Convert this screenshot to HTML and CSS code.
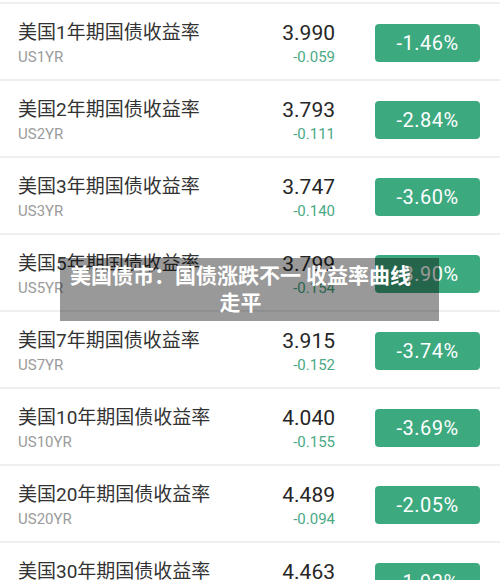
FILE: index.html
```html
<!DOCTYPE html>
<html lang="zh-CN">
<head>
  <meta charset="UTF-8" />
  <meta name="viewport" content="width=device-width, initial-scale=1.0" />
  <title>美国国债收益率</title>
  <link rel="stylesheet" href="styles.css">
</head>
<body>
  <div class="list">
    <div class="row">
      <div class="name">
        <div class="title">美国1年期国债收益率</div>
        <div class="code">US1YR</div>
      </div>
      <div class="value">
        <div class="price">3.990</div>
        <div class="change">-0.059</div>
      </div>
      <div class="badge">-1.46%</div>
    </div>

    <div class="row">
      <div class="name">
        <div class="title">美国2年期国债收益率</div>
        <div class="code">US2YR</div>
      </div>
      <div class="value">
        <div class="price">3.793</div>
        <div class="change">-0.111</div>
      </div>
      <div class="badge">-2.84%</div>
    </div>

    <div class="row">
      <div class="name">
        <div class="title">美国3年期国债收益率</div>
        <div class="code">US3YR</div>
      </div>
      <div class="value">
        <div class="price">3.747</div>
        <div class="change">-0.140</div>
      </div>
      <div class="badge">-3.60%</div>
    </div>

    <div class="row">
      <div class="name">
        <div class="title">美国5年期国债收益率</div>
        <div class="code">US5YR</div>
      </div>
      <div class="value">
        <div class="price">3.799</div>
        <div class="change">-0.154</div>
      </div>
      <div class="badge">-3.90%</div>
    </div>

    <div class="row">
      <div class="name">
        <div class="title">美国7年期国债收益率</div>
        <div class="code">US7YR</div>
      </div>
      <div class="value">
        <div class="price">3.915</div>
        <div class="change">-0.152</div>
      </div>
      <div class="badge">-3.74%</div>
    </div>

    <div class="row">
      <div class="name">
        <div class="title">美国10年期国债收益率</div>
        <div class="code">US10YR</div>
      </div>
      <div class="value">
        <div class="price">4.040</div>
        <div class="change">-0.155</div>
      </div>
      <div class="badge">-3.69%</div>
    </div>

    <div class="row">
      <div class="name">
        <div class="title">美国20年期国债收益率</div>
        <div class="code">US20YR</div>
      </div>
      <div class="value">
        <div class="price">4.489</div>
        <div class="change">-0.094</div>
      </div>
      <div class="badge">-2.05%</div>
    </div>

    <div class="row">
      <div class="name">
        <div class="title">美国30年期国债收益率</div>
        <div class="code">US30YR</div>
      </div>
      <div class="value">
        <div class="price">4.463</div>
        <div class="change">-0.087</div>
      </div>
      <div class="badge">-1.92%</div>
    </div>
  </div>

  <div class="caption">美国债市：国债涨跌不一 收益率曲线走平</div>
</body>
</html>
```

FILE: styles.css
```css
body {
  margin: 0;
  background: #fff;
  font-family: Roboto, "Noto Sans CJK SC", sans-serif;
  color: #2a2a2a;
  overflow: hidden;
}
.list {
  padding-top: 2px;
}
.row {
  display: flex;
  align-items: flex-start;
  box-sizing: border-box;
  height: 77px;
  border-top: 2px solid #efefef;
  padding: 17px 20px 0 18px;
}
.name {
  flex: 1;
}
.title {
  font-size: 19px;
  line-height: 24px;
  color: #333;
}
.code {
  font-size: 15px;
  line-height: 24px;
  color: #9b9b9b;
}
.value {
  text-align: right;
}
.price {
  font-size: 21px;
  line-height: 24px;
  color: #262626;
}
.change {
  font-size: 15px;
  line-height: 24px;
  color: #4aa985;
}
.badge {
  margin: 3px 0 0 40px;
  width: 105px;
  height: 38px;
  line-height: 38px;
  border-radius: 4px;
  background: #3ca97f;
  color: #fff;
  text-align: center;
  font-size: 20px;
  letter-spacing: 0.5px;
}
.caption {
  position: absolute;
  left: 60px;
  top: 258px;
  width: 379px;
  height: 63px;
  box-sizing: border-box;
  padding: 3px 26px 3px 8px;
  background: rgba(0, 0, 0, 0.4);
  color: #fff;
  font-family: "Noto Sans CJK SC", sans-serif;
  font-weight: bold;
  font-size: 21px;
  line-height: 27px;
  text-align: center;
}
```
